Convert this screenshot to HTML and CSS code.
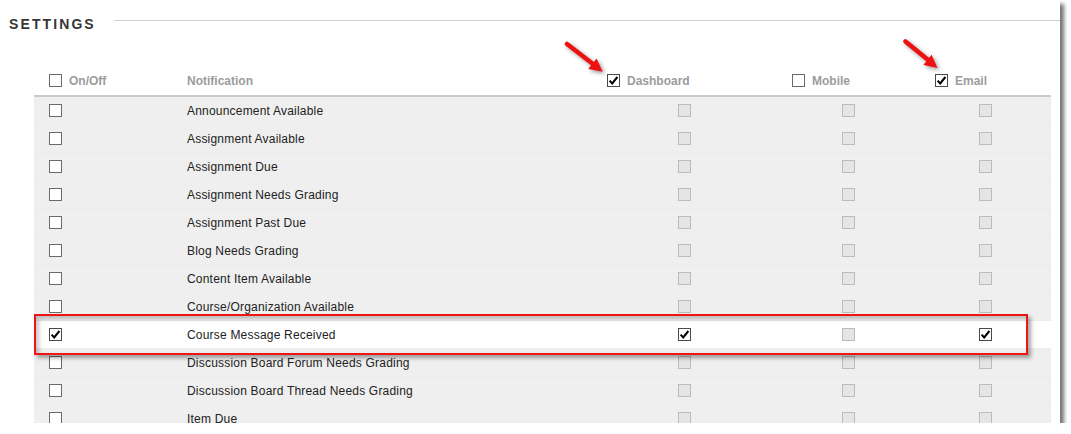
FILE: index.html
```html
<!DOCTYPE html>
<html>
<head>
<meta charset="utf-8">
<link rel="stylesheet" href="styles.css">
</head>
<body>
<div class="shot">
  <div class="title">
    <h2>SETTINGS</h2>
    <div class="rule"></div>
  </div>
  <div class="table">
    <div class="row hdr">
      <div class="cell c-on"><span class="cb"></span><span class="hl">On/Off</span></div>
      <div class="cell c-name"><span class="hl">Notification</span></div>
      <div class="cell c-dash"><span class="cb checked"><svg viewBox="0 0 11 11" width="11" height="11"><path d="M1.6 5.6 L4.2 8.4 L9.4 2" fill="none" stroke="#000" stroke-width="2"/></svg></span><span class="hl">Dashboard</span></div>
      <div class="cell c-mob"><span class="cb"></span><span class="hl">Mobile</span></div>
      <div class="cell c-em"><span class="cb checked"><svg viewBox="0 0 11 11" width="11" height="11"><path d="M1.6 5.6 L4.2 8.4 L9.4 2" fill="none" stroke="#000" stroke-width="2"/></svg></span><span class="hl">Email</span></div>
    </div>
    <div class="row"><div class="cell c-on"><span class="cb"></span></div><div class="cell c-name">Announcement Available</div><div class="cell c-dash"><span class="cb dis"></span></div><div class="cell c-mob"><span class="cb dis"></span></div><div class="cell c-em"><span class="cb dis"></span></div></div>
    <div class="row"><div class="cell c-on"><span class="cb"></span></div><div class="cell c-name">Assignment Available</div><div class="cell c-dash"><span class="cb dis"></span></div><div class="cell c-mob"><span class="cb dis"></span></div><div class="cell c-em"><span class="cb dis"></span></div></div>
    <div class="row"><div class="cell c-on"><span class="cb"></span></div><div class="cell c-name">Assignment Due</div><div class="cell c-dash"><span class="cb dis"></span></div><div class="cell c-mob"><span class="cb dis"></span></div><div class="cell c-em"><span class="cb dis"></span></div></div>
    <div class="row"><div class="cell c-on"><span class="cb"></span></div><div class="cell c-name">Assignment Needs Grading</div><div class="cell c-dash"><span class="cb dis"></span></div><div class="cell c-mob"><span class="cb dis"></span></div><div class="cell c-em"><span class="cb dis"></span></div></div>
    <div class="row"><div class="cell c-on"><span class="cb"></span></div><div class="cell c-name">Assignment Past Due</div><div class="cell c-dash"><span class="cb dis"></span></div><div class="cell c-mob"><span class="cb dis"></span></div><div class="cell c-em"><span class="cb dis"></span></div></div>
    <div class="row"><div class="cell c-on"><span class="cb"></span></div><div class="cell c-name">Blog Needs Grading</div><div class="cell c-dash"><span class="cb dis"></span></div><div class="cell c-mob"><span class="cb dis"></span></div><div class="cell c-em"><span class="cb dis"></span></div></div>
    <div class="row"><div class="cell c-on"><span class="cb"></span></div><div class="cell c-name">Content Item Available</div><div class="cell c-dash"><span class="cb dis"></span></div><div class="cell c-mob"><span class="cb dis"></span></div><div class="cell c-em"><span class="cb dis"></span></div></div>
    <div class="row"><div class="cell c-on"><span class="cb"></span></div><div class="cell c-name">Course/Organization Available</div><div class="cell c-dash"><span class="cb dis"></span></div><div class="cell c-mob"><span class="cb dis"></span></div><div class="cell c-em"><span class="cb dis"></span></div></div>
    <div class="row active"><div class="cell c-on"><span class="cb checked"><svg viewBox="0 0 11 11" width="11" height="11"><path d="M1.6 5.6 L4.2 8.4 L9.4 2" fill="none" stroke="#000" stroke-width="2"/></svg></span></div><div class="cell c-name">Course Message Received</div><div class="cell c-dash"><span class="cb checked"><svg viewBox="0 0 11 11" width="11" height="11"><path d="M1.6 5.6 L4.2 8.4 L9.4 2" fill="none" stroke="#000" stroke-width="2"/></svg></span></div><div class="cell c-mob"><span class="cb dis"></span></div><div class="cell c-em"><span class="cb checked"><svg viewBox="0 0 11 11" width="11" height="11"><path d="M1.6 5.6 L4.2 8.4 L9.4 2" fill="none" stroke="#000" stroke-width="2"/></svg></span></div></div>
    <div class="row"><div class="cell c-on"><span class="cb"></span></div><div class="cell c-name">Discussion Board Forum Needs Grading</div><div class="cell c-dash"><span class="cb dis"></span></div><div class="cell c-mob"><span class="cb dis"></span></div><div class="cell c-em"><span class="cb dis"></span></div></div>
    <div class="row"><div class="cell c-on"><span class="cb"></span></div><div class="cell c-name">Discussion Board Thread Needs Grading</div><div class="cell c-dash"><span class="cb dis"></span></div><div class="cell c-mob"><span class="cb dis"></span></div><div class="cell c-em"><span class="cb dis"></span></div></div>
    <div class="row"><div class="cell c-on"><span class="cb"></span></div><div class="cell c-name">Item Due</div><div class="cell c-dash"><span class="cb dis"></span></div><div class="cell c-mob"><span class="cb dis"></span></div><div class="cell c-em"><span class="cb dis"></span></div></div>
  </div>
  <div class="highlight"></div>
  <svg class="arrows" width="1060" height="100" viewBox="0 0 1060 100">
    <g class="arrow">
      <line x1="567" y1="44" x2="593" y2="64" stroke="#ee1111" stroke-width="4.5" stroke-linecap="round"/>
      <polygon points="602.7,71.7 588.2,69 596.6,58.6" fill="#ee1111"/>
    </g>
    <g class="arrow">
      <line x1="905.5" y1="41.5" x2="928.5" y2="60.3" stroke="#ee1111" stroke-width="4.5" stroke-linecap="round"/>
      <polygon points="937.5,68 923.4,65 931.6,54.8" fill="#ee1111"/>
    </g>
  </svg>
</div>
</body>
</html>
```

FILE: styles.css
```css
html, body {
  margin: 0;
  padding: 0;
  background: #fff;
}

body {
  font-family: "Liberation Sans", Arial, sans-serif;
}

.shot {
  position: relative;
  width: 1060px;
  height: 423px;
  overflow: hidden;
  background: #fff;
  box-shadow: 4px 4px 4px rgba(0, 0, 0, 0.55);
}

.title {
  display: flex;
  align-items: flex-start;
  padding-top: 16px;
}

.title h2 {
  margin: 0 0 0 9px;
  font-size: 14px;
  line-height: 16px;
  font-weight: bold;
  letter-spacing: 2.1px;
  color: #363636;
}

.rule {
  flex: 1;
  height: 1px;
  margin-top: 4px;
  margin-left: 18px;
  background: #cfcfcf;
}

.table {
  margin: 34px 0 0 34px;
  width: 1017px;
  background: #efefef;
}

.row {
  display: grid;
  grid-template-columns: 153px 413px 180px 140px 131px;
  height: 28px;
  box-sizing: border-box;
  border-bottom: 1px solid #ebebeb;
  font-size: 12px;
  letter-spacing: 0.2px;
  color: #222;
}

.row.hdr {
  height: 31px;
  background: #fff;
  border-bottom: 2px solid #cbcbcb;
  letter-spacing: 0;
}

.row.active {
  background: #fff;
}

.cell {
  display: flex;
  align-items: center;
  gap: 7px;
  white-space: nowrap;
}

.c-on { padding-left: 15px; }
.c-dash { padding-left: 78px; }
.c-mob { padding-left: 62px; }
.c-em { padding-left: 59px; }

.hdr .c-on { padding-left: 15px; }
.hdr .c-name { padding-left: 0; }
.hdr .c-dash { padding-left: 7px; }
.hdr .c-mob { padding-left: 12px; }
.hdr .c-em { padding-left: 15px; }

.hl {
  font-weight: bold;
  font-size: 12px;
  color: #9c9c9c;
}

.cb {
  display: block;
  flex: none;
  width: 13px;
  height: 13px;
  box-sizing: border-box;
  border: 1px solid #6a6a6a;
  background: #fff;
  position: relative;
}

.cb svg {
  display: block;
}

.cb.checked {
  border-color: #4a4a4a;
}

.cb.dis {
  border-color: #bcbcbc;
  background: #e5e5e5;
}

.highlight {
  position: absolute;
  left: 34px;
  top: 314px;
  width: 994px;
  height: 41px;
  box-sizing: border-box;
  border: 2px solid #ee1515;
  box-shadow: 3px 3px 4px rgba(0, 0, 0, 0.35), inset 3px 3px 4px rgba(0, 0, 0, 0.22);
  pointer-events: none;
}

.arrows {
  position: absolute;
  left: 0;
  top: 0;
  pointer-events: none;
}

.arrow {
  filter: drop-shadow(2px 2px 2px rgba(0, 0, 0, 0.4));
}
```
